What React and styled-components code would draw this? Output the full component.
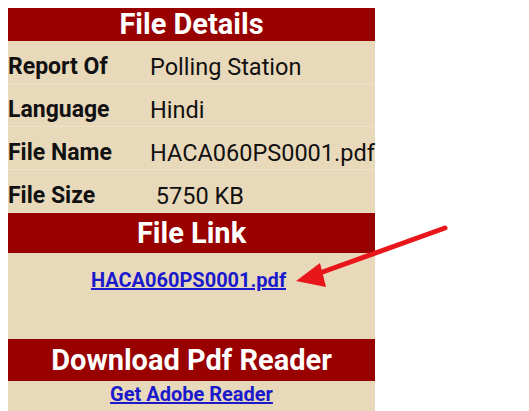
import styled, { createGlobalStyle } from "styled-components";

const Global = createGlobalStyle`
  body {
    margin: 8px;
    background: #fff;
    font-family: Roboto, "Liberation Sans", sans-serif;
  }
`;

const details = [
  ["Report Of", "Polling Station"],
  ["Language", "Hindi"],
  ["File Name", "HACA060PS0001.pdf"],
  ["File Size", "\u00a05750 KB"],
];

const App = () => (
  <Page>
    <Global />
    <Panel>
      <Heading $h={33}>File Details</Heading>
      {details.map(([label, value]) => (
        <Row key={label}>
          <Label>{label}</Label>
          <Value>{value}</Value>
        </Row>
      ))}
      <Heading $h={40}>File Link</Heading>
      <LinkCell>
        <Link href="#">HACA060PS0001.pdf</Link>
      </LinkCell>
      <Heading $h={42}>Download Pdf Reader</Heading>
      <ReaderCell>
        <Link href="#">Get Adobe Reader</Link>
      </ReaderCell>
    </Panel>
    <Arrow width="170" height="80" viewBox="0 0 170 80">
      <line x1="160" y1="6" x2="32" y2="52" stroke="#e8161b" strokeWidth="5" strokeLinecap="round" />
      <polygon points="11,59 35,41 41,65" fill="#e8161b" />
    </Arrow>
  </Page>
);

export default App;

const Page = styled.div`
  position: relative;
  width: 513px;
`;

const Panel = styled.div`
  width: 367px;
  background: #e9d9bb;
  display: flex;
  flex-direction: column;
`;

const Heading = styled.div`
  background: #990000;
  color: #fff;
  font-weight: 700;
  font-size: 29px;
  text-align: center;
  height: ${(p) => p.$h}px;
  line-height: ${(p) => p.$h}px;
  white-space: nowrap;
`;

const Row = styled.div`
  display: grid;
  grid-template-columns: 142px 1fr;
  align-items: center;
  height: 43px;
  box-sizing: border-box;
  padding-top: 9px;
  border-bottom: 1px solid #eee1c6;
`;

const Label = styled.div`
  font-weight: 700;
  font-size: 23px;
  color: #111;
`;

const Value = styled.div`
  font-size: 23.5px;
  color: #111;
  white-space: nowrap;
`;

const LinkCell = styled.div`
  height: 86px;
  text-align: center;
  padding: 16px 6px 0 0;
  box-sizing: border-box;
`;

const ReaderCell = styled.div`
  height: 31px;
  text-align: center;
  padding-top: 2px;
  box-sizing: border-box;
`;

const Link = styled.a`
  color: #1a1acc;
  font-weight: 700;
  font-size: 20px;
  line-height: 23px;
  text-decoration: underline;
`;

const Arrow = styled.svg`
  position: absolute;
  left: 277px;
  top: 214px;
`;
